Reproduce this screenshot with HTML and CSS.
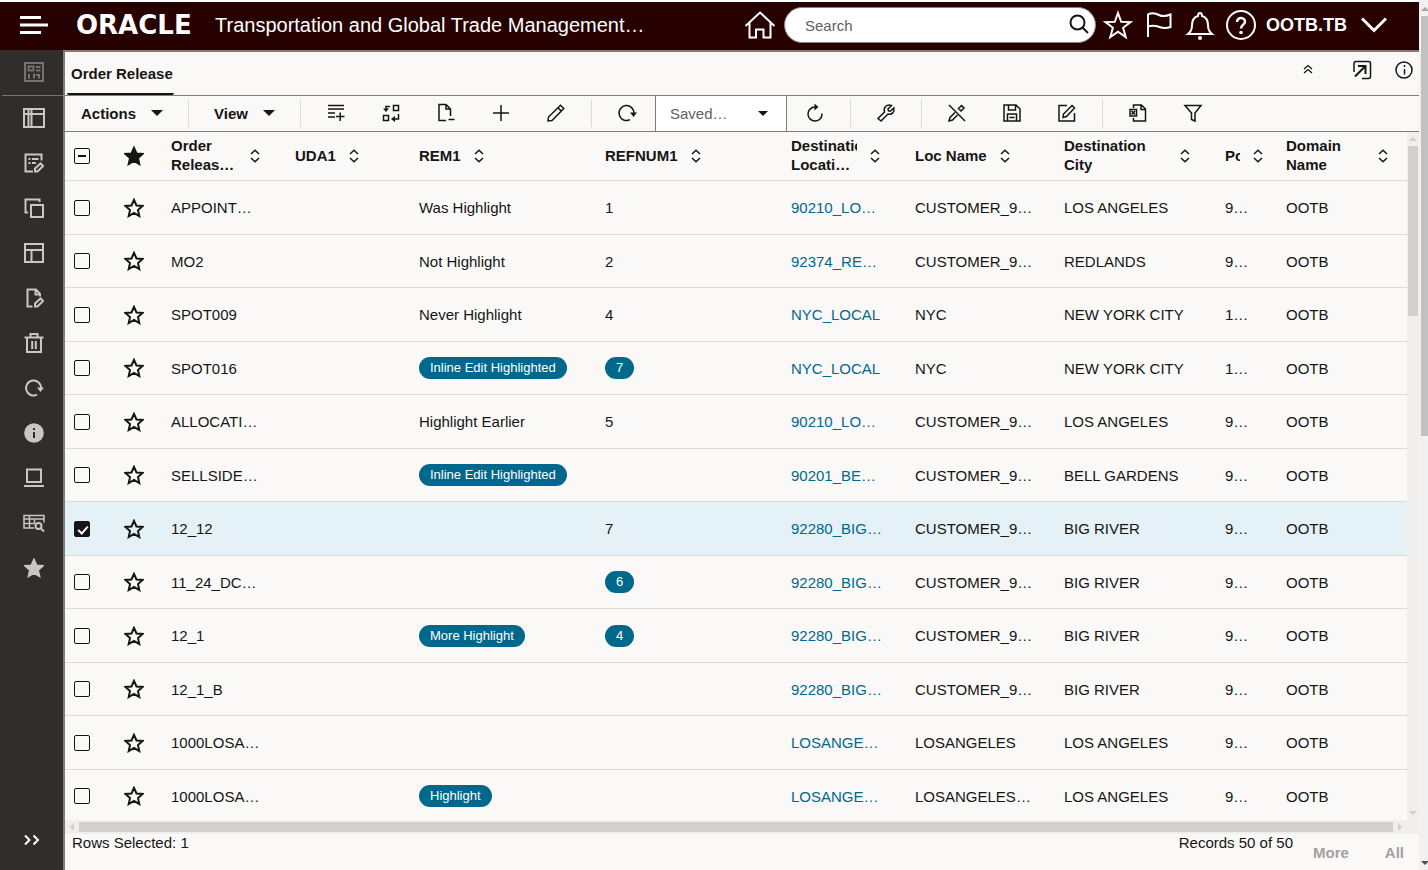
FILE: index.html
```
<!DOCTYPE html>
<html lang="en">
<head>
    <meta charset="UTF-8">
    <meta name="viewport" content="width=device-width, initial-scale=1.0">
    <title>Order Release</title>
    <link rel="stylesheet" href="styles.css">
</head>
<body>
    <svg class="sprite" aria-hidden="true">
        <symbol id="star" viewBox="0 0 20 20"><path d="M10 1.800l2.500 5.700 6 .5-4.500 4.100 1.300 6-5.300-3.100-5.300 3.100 1.300-6L1.500 8l6-.5z"/></symbol>
        <symbol id="sort" viewBox="0 0 12 16"><path d="M2 6l4-3.800L10 6M2 10l4 3.800 4-3.800"/></symbol>
        <symbol id="caret" viewBox="0 0 12 6"><path d="M0 0h12L6 6z"/></symbol>
        <symbol id="reload" viewBox="0 0 20 20"><path d="M17 10.500A7.500 7.500 0 1 0 13 16.700"/><path class="solid" d="M13 9.500h7L16.500 14z"/></symbol>
    </svg>

    <div class="page">
        <header>
            <button class="menu-btn" aria-label="Menu">
                <svg width="28" height="18" viewBox="0 0 28 18"><path d="M0 1.500h21M0 9h28M0 16.500h21"/></svg>
            </button>
            <a class="logo" href="#">ORACLE</a>
            <span class="app-title">Transportation and Global Trade Management…</span>
            <a class="home" href="#" aria-label="Home">
                <svg width="32" height="32" viewBox="0 0 32 32"><path d="M1.500 17L16 3.500 30.500 17M5.500 13.500V28.500H12V20.500h7.500v8H26.500V13.500"/></svg>
            </a>
            <form class="search">
                <input type="text" placeholder="Search" aria-label="Search">
                <button type="button" aria-label="Run search">
                    <svg width="22" height="22" viewBox="0 0 22 22"><circle cx="9.500" cy="8.500" r="7"/><path d="M14.500 13.500l5.500 5.500"/></svg>
                </button>
            </form>
            <button aria-label="Favorites"><svg width="32" height="32" viewBox="0 0 32 32"><path d="M16 4l3.200 8.800 9.300.3-7.400 5.700 2.600 9.200-7.700-5.300-7.700 5.300 2.600-9.200-7.400-5.700 9.300-.3z"/></svg></button>
            <button aria-label="Flags"><svg width="32" height="32" viewBox="0 0 32 32"><path d="M5 28V5.500c4-2 7-1.500 11 .5s8 1 11.500-.5V18c-4 1.500-7 1.500-11 0s-7.500-2-11.500-.5"/></svg></button>
            <button aria-label="Notifications"><svg width="32" height="32" viewBox="0 0 32 32"><path d="M4 25c3-2.500 4-4.500 4-8.500 0-6 2.500-8.500 6-9.500 0-4 4-4 4 0 3.500 1 6 3.500 6 9.500 0 4 1 6 4 8.500z"/><circle class="solid" cx="16" cy="29" r="2"/></svg></button>
            <button aria-label="Help"><svg width="32" height="32" viewBox="0 0 32 32"><circle cx="16" cy="16" r="14"/><path d="M12 13c0-5.500 8.500-5 8 0-.3 2.500-4 3-4 6.500" stroke-width="2.500"/><circle class="solid" cx="16" cy="23.500" r="1.800"/></svg></button>
            <button class="user">OOTB.TB
                <svg width="26" height="16" viewBox="0 0 26 16"><path d="M1 1.500l12 12 12-12" stroke-width="3"/></svg>
            </button>
        </header>

        <div class="content">
            <aside>
                <a class="first" href="#" aria-label="Dashboard"><svg viewBox="0 0 20 20"><path d="M1 1h18v18H1zM4.500 4.500h5v4h-5zM12 5h4.500M12 8.500h4.500M5 12v4.500M10 11.500v5M15 12v4.500M5 16h1M12 13h2"/></svg></a>
                <a href="#" aria-label="Workbench"><svg viewBox="0 0 22 20"><path d="M1 1h20v18H1zM1 6h20M5.500 1v18M8.500 1v18"/></svg></a>
                <a href="#" aria-label="Edit list"><svg viewBox="0 0 20 20"><path d="M9 18.500H1.500v-17h16v6M4.500 6h2M8 6h6.500M4.500 10h2M8 10h4M11 18.500v-3l5.500-5 2.500 2.500-5.500 5.500z"/></svg></a>
                <a href="#" aria-label="Copy"><svg viewBox="0 0 20 20"><path d="M4 14.500H1.500v-13h14V4M7 7h12v12H7z"/></svg></a>
                <a href="#" aria-label="Layout"><svg viewBox="0 0 20 20"><path d="M1 1h18v18H1zM1 7h18M7.500 7v11.500"/></svg></a>
                <a href="#" aria-label="Edit document"><svg viewBox="0 0 20 20"><path d="M8.500 18.500H3.500v-17h8.500l4 4.500v2.500M11.500 1.500v5H16M11 18.500v-3l5.500-5 2.500 2.500-5.500 5.500z"/></svg></a>
                <a href="#" aria-label="Delete"><svg viewBox="0 0 20 20"><path d="M.5 4.500h19M6.500 4V1h7v3M3 4.500V19h14V4.500M8.200 8v8M11.800 8v8"/></svg></a>
                <a href="#" aria-label="Refresh"><svg viewBox="0 0 20 20"><use href="#reload"/></svg></a>
                <a href="#" aria-label="Information"><svg viewBox="0 0 20 20"><circle class="solid" cx="10" cy="10" r="9.800"/><path class="mark" d="M10 9v6M10 5v2"/></svg></a>
                <a href="#" aria-label="Console"><svg viewBox="0 0 20 20"><path d="M3 1.500h14V14H3zM0 18h20"/></svg></a>
                <a href="#" aria-label="Search table"><svg viewBox="0 0 22 20"><path d="M11 15H1V2.500h20v7M1 6h20M1 10.500h11M6.500 2.500V15M11.500 6v4" stroke-width="1.500"/><circle cx="15.500" cy="13" r="3"/><path d="M17.500 15l3.500 3.500"/></svg></a>
                <a href="#" aria-label="Favorites"><svg class="filled" viewBox="0 0 20 20"><use href="#star"/></svg></a>
                <button class="expand" aria-label="Expand"><svg viewBox="0 0 20 20"><path d="M3 5.500L7.500 10 3 14.500M11.500 5.500L16 10l-4.500 4.500"/></svg></button>
            </aside>

            <main>
                <div class="tabs">
                    <a class="tab" href="#">Order Release</a>
                    <div class="tab-tools">
                        <button aria-label="Collapse"><svg viewBox="0 0 20 20"><path d="M6 9l4-3.500L14 9M6 13L10 9.500l4 3.500" stroke-width="1.300"/></svg></button>
                        <button aria-label="Open in new window"><svg viewBox="0 0 20 20"><path d="M2 12V3.500q0-2 2-2h12.500q2 0 2 2v13q0 2-2 2H10"/><path d="M3 16.500L13 6.500M6 6h7.500v8" stroke-width="2"/></svg></button>
                        <button aria-label="Information"><svg viewBox="0 0 20 20"><circle cx="10" cy="10" r="8"/><path d="M10.500 9v5.500M10.500 5v2"/></svg></button>
                    </div>
                </div>

                <div class="toolbar">
                    <div class="group menus">
                        <button>Actions <svg class="caret"><use href="#caret"/></svg></button>
                    </div>
                    <div class="group menus">
                        <button>View <svg class="caret"><use href="#caret"/></svg></button>
                    </div>
                    <div class="group">
                        <button aria-label="Add row"><svg viewBox="0 0 20 20"><path d="M2 2.500h16M2 6h16M2 10h7M2 14h7M10 13.500h8.500M14.200 9.500v8.500"/></svg></button>
                        <button aria-label="Replace"><svg viewBox="0 0 20 20"><path d="M12.500 2.500h5v5h-5zM2.500 12.500h5v5h-5zM9 3.500H5V7M17.500 11v5H13"/><path class="solid" d="M2 5.500h6L5 9zM14 13v6l-4-3z"/></svg></button>
                        <button aria-label="Remove page"><svg viewBox="0 0 20 20"><path d="M10 17.500H3v-16h7l4.500 4.500v7M10 1.500V6h4.500M12.500 16.500h6"/></svg></button>
                        <button aria-label="Add"><svg viewBox="0 0 20 20"><path d="M2 10h16M10 2v16"/></svg></button>
                        <button aria-label="Edit"><svg viewBox="0 0 20 20"><path d="M2 18l.5-4L14.500 2.200l3.300 3.300L6 17.500zM12 4.800l3.300 3.300"/></svg></button>
                    </div>
                    <div class="group plain">
                        <button aria-label="Refresh"><svg viewBox="0 0 20 20"><use href="#reload"/></svg></button>
                    </div>
                    <div class="saved">
                        <select aria-label="Saved search"><option>Saved…</option></select>
                        <svg><use href="#caret"/></svg>
                    </div>
                    <div class="group after-select">
                        <button aria-label="Reset"><svg viewBox="0 0 20 20"><path d="M17 10.500A7 7 0 1 1 10 4"/><path class="solid" d="M9.500 .5v7L13.500 4z"/></svg></button>
                    </div>
                    <div class="group">
                        <button aria-label="Settings"><svg viewBox="0 0 20 20"><path d="M15.500 2.500L12 6l.5 1.800 1.800.4 3.500-3.200c1 4-1.800 7-5.800 6L5 18l-3-2.500L8.500 9c-1.500-4.500 2.500-8.500 7-6.500z"/></svg></button>
                    </div>
                    <div class="group">
                        <button aria-label="Stop editing"><svg viewBox="0 0 20 20"><path d="M2 2l16 16M8 9.500l-5 5L2 18l3.500-1 5-5M14.500 2.500L17 5l-3 3-2.500-2.500z"/></svg></button>
                        <button aria-label="Save"><svg viewBox="0 0 20 20"><path d="M2 2h12l4 4v12H2zM6.500 2v5h7V2M5.500 18v-7h9v7M7.500 14.500h5"/></svg></button>
                        <button aria-label="Edit form"><svg viewBox="0 0 20 20"><path d="M10 2.500H2v15.500h15.500V10M6 14.500l.5-3.500L15 2.500l2.500 2.500-8 8.500z"/></svg></button>
                    </div>
                    <div class="group plain">
                        <button aria-label="Export"><svg viewBox="0 0 20 20"><path d="M5.500 5V2h8l4 4v12h-12v-3M13 2v4.500h4.500M2 6.500h6.500V13H2zM3.500 8l3.500 3.500M7 8l-3.500 3.500"/></svg></button>
                        <button aria-label="Filter"><svg viewBox="0 0 20 20"><path d="M2 2.500h16l-6 7.500v8l-3.500-1.500V10z"/></svg></button>
                    </div>
                </div>

                <div class="table-area">
                    <div class="table-wrap">
                        <table>
                            <colgroup>
                                <col class="w-check"><col class="w-star"><col class="w-sm"><col class="w-sm"><col class="w-lg"><col class="w-lg">
                                <col class="w-sm"><col class="w-loc"><col class="w-city"><col class="w-post"><col>
                            </colgroup>
                            <thead>
                                <tr>
                                    <th><input class="mixed" type="checkbox" aria-label="Select all"></th>
                                    <th><svg class="star filled"><use href="#star"/></svg></th>
                                    <th><div><span>Order<br>Releas…</span><svg class="sort"><use href="#sort"/></svg></div></th>
                                    <th><div><span class="hug">UDA1</span><svg class="sort"><use href="#sort"/></svg></div></th>
                                    <th><div><span class="hug">REM1</span><svg class="sort"><use href="#sort"/></svg></div></th>
                                    <th><div><span class="hug">REFNUM1</span><svg class="sort"><use href="#sort"/></svg></div></th>
                                    <th><div><span>Destination<br>Locati…</span><svg class="sort"><use href="#sort"/></svg></div></th>
                                    <th><div><span class="hug">Loc Name</span><svg class="sort"><use href="#sort"/></svg></div></th>
                                    <th><div><span>Destination<br>City</span><svg class="sort"><use href="#sort"/></svg></div></th>
                                    <th class="narrow"><div><span>Po</span><svg class="sort"><use href="#sort"/></svg></div></th>
                                    <th><div><span>Domain<br>Name</span><svg class="sort"><use href="#sort"/></svg></div></th>
                                </tr>
                            </thead>
                            <tbody id="orderRows"></tbody>
                        </table>
                    </div>
                    <div class="v-scroll">
                        <i class="arrow up"></i>
                        <div class="thumb"></div>
                        <i class="arrow down"></i>
                    </div>
                    <div class="h-scroll">
                        <i class="arrow left"></i>
                        <div class="thumb"></div>
                        <i class="arrow right"></i>
                    </div>
                </div>

                <footer>
                    <span class="selected-count">Rows Selected: 1</span>
                    <span>Records 50 of 50</span>
                    <button disabled>More</button>
                    <button disabled>All</button>
                </footer>
            </main>
        </div>
    </div>
    <div class="page-scroll">
        <i class="arrow up"></i>
        <div class="thumb"></div>
        <i class="arrow down"></i>
    </div>

    <script>
        // id, remark, refnum, destination, location name, city, postal code
        // a leading * marks a highlighted value
        const orders = [
            ['APPOINT…', 'Was Highlight', '1', '90210_LO…', 'CUSTOMER_9…', 'LOS ANGELES', '9…'],
            ['MO2', 'Not Highlight', '2', '92374_RE…', 'CUSTOMER_9…', 'REDLANDS', '9…'],
            ['SPOT009', 'Never Highlight', '4', 'NYC_LOCAL', 'NYC', 'NEW YORK CITY', '1…'],
            ['SPOT016', '*Inline Edit Highlighted', '*7', 'NYC_LOCAL', 'NYC', 'NEW YORK CITY', '1…'],
            ['ALLOCATI…', 'Highlight Earlier', '5', '90210_LO…', 'CUSTOMER_9…', 'LOS ANGELES', '9…'],
            ['SELLSIDE…', '*Inline Edit Highlighted', '', '90201_BE…', 'CUSTOMER_9…', 'BELL GARDENS', '9…'],
            ['12_12', '', '7', '92280_BIG…', 'CUSTOMER_9…', 'BIG RIVER', '9…'],
            ['11_24_DC…', '', '*6', '92280_BIG…', 'CUSTOMER_9…', 'BIG RIVER', '9…'],
            ['12_1', '*More Highlight', '*4', '92280_BIG…', 'CUSTOMER_9…', 'BIG RIVER', '9…'],
            ['12_1_B', '', '', '92280_BIG…', 'CUSTOMER_9…', 'BIG RIVER', '9…'],
            ['1000LOSA…', '', '', 'LOSANGE…', 'LOSANGELES', 'LOS ANGELES', '9…'],
            ['1000LOSA…', '*Highlight', '', 'LOSANGE…', 'LOSANGELES…', 'LOS ANGELES', '9…']
        ];
        const selectedId = '12_12';

        function cell(value) {
            if (value.startsWith('*')) {
                return `<td><span class="badge">${value.slice(1)}</span></td>`;
            }
            return `<td>${value}</td>`;
        }

        document.getElementById('orderRows').innerHTML = orders.map(function (o) {
            const selected = o[0] === selectedId;
            return `<tr class="${selected ? 'selected' : ''}">
                <td><input type="checkbox" aria-label="Select ${o[0]}" ${selected ? 'checked' : ''}></td>
                <td><svg class="star"><use href="#star"/></svg></td>
                <td>${o[0]}</td><td></td>${cell(o[1])}${cell(o[2])}
                <td><a href="#">${o[3]}</a></td>
                <td>${o[4]}</td><td>${o[5]}</td><td>${o[6]}</td><td>OOTB</td>
            </tr>`;
        }).join('');
    </script>
</body>
</html>
```
FILE: styles.css
```
* {
    box-sizing: border-box;
}

body {
    margin: 0;
    height: 100vh;
    display: flex;
    overflow: hidden;
    background-color: #fff;
    color: #161513;
    font-family: "Liberation Sans", Arial, sans-serif;
    font-size: 15px;
}

button {
    border: none;
    background: none;
    padding: 0;
    color: inherit;
    font: inherit;
    cursor: pointer;
    display: flex;
    align-items: center;
    justify-content: center;
}

a {
    color: #00688c;
    text-decoration: none;
}

svg {
    width: 20px;
    height: 20px;
    flex: none;
    fill: none;
    stroke: currentColor;
    stroke-width: 1.5;
}

.sprite {
    position: absolute;
    width: 0;
    height: 0;
}

.solid {
    fill: currentColor;
    stroke: none;
}

.filled {
    fill: currentColor;
}

.page {
    flex: 1;
    min-width: 0;
    display: flex;
    flex-direction: column;
    padding-top: 2px;
}

/* top bar */
header {
    flex: none;
    height: 48px;
    padding: 0 32px 2px 20px;
    display: flex;
    align-items: center;
    background-color: #270000;
    color: #fff;
}

header svg {
    width: auto;
    height: auto;
    stroke-width: 2;
}

header > button:not(.menu-btn) {
    margin-left: 9px;
}

.menu-btn svg {
    stroke-width: 3;
}

.logo {
    width: 139px;
    margin-left: 28px;
    color: #fff;
    font-family: "DejaVu Sans", Verdana, sans-serif;
    font-weight: bold;
    font-size: 26px;
}

.app-title {
    flex: 1;
    min-width: 0;
    font-size: 20px;
    white-space: nowrap;
    overflow: hidden;
    text-overflow: ellipsis;
}

.home {
    height: 32px;
    color: #fff;
}

.search {
    width: 312px;
    height: 36px;
    margin-left: 8px;
    margin-right: -3px;
    padding: 0 5px 0 20px;
    display: flex;
    align-items: center;
    background-color: #fff;
    border: 1px solid #8b8580;
    border-radius: 18px;
    color: #161513;
}

.search input {
    flex: 1;
    min-width: 0;
    border: none;
    outline: none;
    padding: 0;
    background: none;
    font: inherit;
}

.search input::placeholder {
    color: #65605c;
}

header .user {
    font-weight: bold;
    font-size: 18px;
    gap: 14px;
}

.content {
    flex: 1;
    min-height: 0;
    display: flex;
}

/* left icon rail */
aside {
    flex: none;
    width: 63px;
    padding-left: 2px;
    display: flex;
    flex-direction: column;
    background-color: #312d2a;
}

aside a,
.expand {
    height: 45px;
    padding: 0 0 2px 3px;
    display: flex;
    align-items: center;
    justify-content: center;
    color: #c9c6c4;
}

aside a svg {
    stroke-width: 2;
}

aside svg[viewBox="0 0 22 20"] {
    width: 22px;
}

aside .first {
    height: 46px;
    color: #76726f;
    border-bottom: 1px solid #76726f;
}

.mark {
    stroke: #312d2a;
}

.expand {
    margin-top: auto;
    margin-bottom: 7px;
    padding: 0 2px 2px 0;
    color: #fff;
}

.expand svg {
    stroke-width: 2;
}

main {
    flex: 1;
    min-width: 0;
    display: flex;
    flex-direction: column;
    background-color: #fbf9f8;
    border-top: 2px solid #7f7c7a;
    border-left: 2px solid #7f7c7a;
}

.tabs {
    flex: none;
    height: 44px;
    padding: 0 5px 0 2px;
    display: flex;
    justify-content: space-between;
    border-bottom: 1px solid #7f7c7a;
}

.tab {
    padding: 0 1px 0 4px;
    color: #161513;
    font-weight: bold;
    line-height: 43px;
    border-bottom: 2px solid #161513;
    border-radius: 2px;
}

.tab-tools {
    display: flex;
    align-items: center;
    padding-bottom: 7px;
}

.tab-tools button {
    margin-left: 22px;
}

.tab-tools button:nth-child(2) {
    margin-left: 34px;
}

/* toolbar */
.toolbar {
    flex: none;
    height: 36px;
    padding-bottom: 1px;
    display: flex;
    align-items: center;
    border-bottom: 1px solid #7f7c7a;
}

.group {
    height: 28px;
    padding: 0 7px 0 8px;
    display: flex;
    border-right: 1px solid #dcdad8;
}

.group button {
    width: 55px;
}

.menus {
    padding: 0 25px;
}

.menus:first-child {
    padding-left: 16px;
}

.menus button {
    width: auto;
    gap: 15px;
    font-weight: bold;
}

.plain {
    padding-right: 0;
    border: none;
}

.after-select {
    padding-left: 1px;
}

.menus .caret,
.saved svg {
    width: 12px;
    height: 6px;
    fill: currentColor;
    stroke: none;
}

.saved {
    position: relative;
    width: 132px;
    height: 35px;
    margin-bottom: -1px;
}

.saved select {
    width: 100%;
    height: 100%;
    padding: 0 14px;
    appearance: none;
    background-color: #fff;
    border: 1px solid #7f7c7a;
    border-top: none;
    border-bottom: none;
    border-radius: 0;
    color: #65605c;
    font: inherit;
}

.saved svg {
    position: absolute;
    right: 19px;
    top: 15px;
    width: 10px;
    height: 5px;
    pointer-events: none;
}

/* order table */
.table-area {
    flex: 1;
    min-height: 0;
    display: grid;
    grid-template-columns: minmax(0, 1fr) 12px;
    grid-template-rows: minmax(0, 1fr) 14px;
}

.table-wrap {
    overflow: hidden;
}

table {
    width: 100%;
    table-layout: fixed;
    border-collapse: separate;
    border-spacing: 0;
}

.w-check { width: 44px; }
.w-star { width: 50px; }
.w-sm { width: 124px; }
.w-lg { width: 186px; }
.w-loc { width: 149px; }
.w-city { width: 161px; }
.w-post { width: 61px; }

th,
td {
    padding: 0 0 0 12px;
    text-align: left;
    vertical-align: middle;
    white-space: nowrap;
    border-bottom: 1px solid #dcdad8;
}

th {
    height: 49px;
    padding-right: 22px;
    line-height: 19px;
}

th div {
    display: flex;
    align-items: center;
    gap: 12px;
}

th span {
    flex: 1;
    min-width: 0;
    padding-bottom: 2px;
    overflow: hidden;
}

th .hug {
    flex: none;
}

th.narrow {
    padding-right: 10px;
}

th:last-child {
    padding-right: 18px;
}

td {
    height: 54px;
}

/* rows alternate so that two of them take 107px */
tbody tr:nth-child(even) td {
    height: 53px;
}

th:first-child,
td:first-child {
    padding: 0 0 0 9px;
}

th:nth-child(2),
td:nth-child(2) {
    padding: 0 0 0 15px;
}

.selected td {
    background-color: #e4f1f7;
}

.sort {
    width: 12px;
    height: 16px;
}

.star {
    display: block;
    stroke-width: 2;
}

td input,
th input {
    display: block;
    appearance: none;
    width: 16px;
    height: 16px;
    margin: 0;
    border: 1px solid #161513;
    border-radius: 2px;
    position: relative;
}

td input:checked {
    background-color: #161513;
}

td input:checked::after {
    content: "";
    position: absolute;
    left: 5px;
    top: 2px;
    width: 4px;
    height: 8px;
    border: solid #fff;
    border-width: 0 2px 2px 0;
    transform: rotate(42deg);
}

.mixed::after {
    content: "";
    position: absolute;
    left: 3px;
    top: 6px;
    width: 8px;
    height: 2px;
    background-color: #161513;
}

.badge {
    display: inline-block;
    height: 22px;
    padding: 0 11px;
    background-color: #00688c;
    border-radius: 11px;
    color: #fff;
    font-size: 13px;
    line-height: 21px;
}

/* scroll bars */
.v-scroll,
.h-scroll {
    display: flex;
    background-color: #f0efee;
}

.v-scroll {
    flex-direction: column;
    align-items: center;
    padding: 5px 0;
}

.h-scroll {
    grid-column: 1 / -1;
    align-items: center;
    padding: 0 5px;
    gap: 5px;
}

.thumb {
    background-color: #d2d0ce;
}

.v-scroll .thumb {
    width: 10px;
    height: 25%;
    margin: 5px 0 auto;
}

.h-scroll .thumb {
    flex: 1;
    height: 10px;
}

.h-scroll .right {
    margin-right: 12px;
}

.arrow {
    flex: none;
    border: 4px solid transparent;
}

.up {
    border-top: none;
    border-bottom-color: #d2d0ce;
}

.down {
    border-bottom: none;
    border-top-color: #d2d0ce;
}

.left {
    border-left: none;
    border-right-color: #d2d0ce;
}

.right {
    border-right: none;
    border-left-color: #d2d0ce;
}

.page-scroll {
    flex: none;
    width: 9px;
    padding: 7px 0 5px 2px;
    display: flex;
    flex-direction: column;
    background-color: #f1f1f1;
    overflow: hidden;
}

.page-scroll .thumb {
    height: 49%;
    margin: 5px 0 auto;
    background-color: #c1c1c1;
}

.page-scroll .up {
    border-bottom-color: #a3a3a3;
}

.page-scroll .down {
    border-top-color: #505050;
}

footer {
    flex: none;
    height: 36px;
    padding: 0 15px 0 7px;
    display: flex;
    line-height: 18px;
}

.selected-count {
    flex: 1;
}

footer button {
    margin-top: 10px;
    margin-left: 20px;
    height: 18px;
    color: #a3a09e;
    font-weight: bold;
}

footer button:last-child {
    margin-left: 36px;
}
```
